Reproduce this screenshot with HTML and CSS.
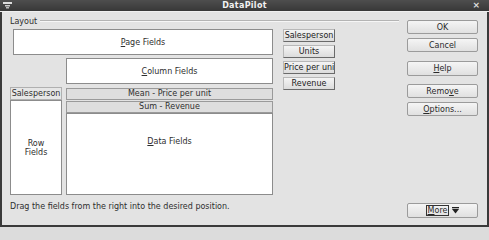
FILE: index.html
```html
<!DOCTYPE html>
<html>
<head>
<meta charset="utf-8">
<link rel="stylesheet" href="styles.css">
</head>
<body>
<div class="window">
  <div class="titlebar">
    <svg class="menu-icon" width="9" height="7" viewBox="0 0 9 7"><rect x="0" y="0" width="9" height="2" fill="#ddd"/><rect x="2" y="3" width="5" height="1.5" fill="#ccc"/><rect x="3" y="5" width="3" height="1.5" fill="#bbb"/></svg>
    <span class="title">DataPilot</span>
    <span class="close">×</span>
  </div>
  <div class="content">
    <div class="main">
      <div class="legend"><span class="legend-text">Layout</span><span class="legend-line"></span></div>
      <div class="layout-row">
        <div class="grid">
          <div class="box page"><span><u>P</u>age Fields</span></div>
          <div class="box column"><span><u>C</u>olumn Fields</span></div>
          <div class="hdr hdr-row">Salesperson</div>
          <div class="hdr hdr-mean">Mean - Price per unit</div>
          <div class="hdr hdr-sum">Sum - Revenue</div>
          <div class="box rowf"><span>Row<br>Fields</span></div>
          <div class="box data"><span><u>D</u>ata Fields</span></div>
        </div>
        <div class="fields">
          <div class="fbtn">Salesperson</div>
          <div class="fbtn">Units</div>
          <div class="fbtn">Price per unit</div>
          <div class="fbtn">Revenue</div>
        </div>
      </div>
      <div class="hint">Drag the fields from the right into the desired position.</div>
    </div>
    <div class="side">
      <div class="btn b-ok">OK</div>
      <div class="btn b-cancel">Cancel</div>
      <div class="btn b-help"><u>H</u>elp</div>
      <div class="btn b-remove">Remo<u>v</u>e</div>
      <div class="btn b-options"><u>O</u>ptions...</div>
      <div class="btn b-more"><span class="focus"><u>M</u>ore</span><svg class="dbl" width="7" height="7" viewBox="0 0 7 7"><rect x="0" y="0" width="7" height="1.3" fill="#222"/><path d="M0 2 L7 2 L3.5 6.5 Z" fill="#222"/></svg></div>
    </div>
  </div>
</div>
</body>
</html>
```
FILE: styles.css
```css
html, body {
  margin: 0;
  padding: 0;
  background: #dcdcdc;
}
body {
  font-family: "DejaVu Sans", "Liberation Sans", sans-serif;
  font-size: 8px;
  color: #2e2e2e;
}
.window {
  width: 489px;
  height: 227px;
  box-sizing: border-box;
  border: 2px solid #3a3a3a;
  border-top: none;
  background: #e3e3e3;
  display: flex;
  flex-direction: column;
}
.titlebar {
  height: 11px;
  background: linear-gradient(#4e4e4e, #383838);
  border-bottom: 1px solid #f0f0f0;
  display: flex;
  align-items: center;
  position: relative;
  margin: 0 -2px;
}
.menu-icon {
  margin-left: 3px;
}
.title {
  position: absolute;
  left: 0;
  right: 0;
  text-align: center;
  color: #f2f2f2;
  font-weight: bold;
  font-size: 8px;
  letter-spacing: 0.3px;
}
.close {
  margin-left: auto;
  margin-right: 9px;
  color: #ddd;
  font-size: 9px;
  font-weight: bold;
  line-height: 11px;
}
.content {
  flex: 1;
  display: flex;
}
.main {
  width: 397px;
  box-sizing: border-box;
  padding-left: 8px;
  display: flex;
  flex-direction: column;
}
.legend {
  display: flex;
  align-items: center;
  height: 14px;
  margin-top: 2px;
}
.legend-text {
  margin-right: 3px;
}
.legend-line {
  flex: 1;
  height: 0;
  border-top: 1px solid #b4b4b4;
  border-bottom: 1px solid #f6f6f6;
}
.layout-row {
  display: flex;
  margin-top: 1px;
}
.grid {
  display: grid;
  grid-template-columns: 52px 207px;
  grid-template-rows: 26px 29px 16px 13px 82px;
  column-gap: 4px;
  grid-template-areas:
    "page page"
    ". column"
    "hrow hmean"
    "rowf hsum"
    "rowf data";
}
.box {
  background: #fff;
  border: 1px solid #8c8c8c;
  box-sizing: border-box;
  display: flex;
  align-items: center;
  justify-content: center;
  text-align: center;
}
.page {
  grid-area: page;
  margin-left: 3px;
}
.column {
  grid-area: column;
  height: 26px;
  align-self: end;
}
.hdr {
  background: #dedede;
  border: 1px solid #9a9a9a;
  box-sizing: border-box;
  height: 12px;
  line-height: 10px;
  text-align: center;
  white-space: nowrap;
}
.hdr-row {
  grid-area: hrow;
  align-self: end;
  height: 13px;
  line-height: 11px;
  background: #e6e6e6;
  border-color: #b0b0b0;
}
.hdr-mean {
  grid-area: hmean;
  align-self: end;
  height: 12px;
}
.hdr-sum {
  grid-area: hsum;
  align-self: start;
  height: 12px;
  margin-top: 1px;
}
.rowf {
  grid-area: rowf;
  line-height: 9px;
}
.data {
  grid-area: data;
  align-items: flex-start;
  padding-top: 23px;
}
.fields {
  margin-left: 10px;
  display: flex;
  flex-direction: column;
  gap: 3px;
}
.fbtn {
  width: 52px;
  height: 13px;
  box-sizing: border-box;
  border: 1px solid #b8b8b8;
  border-right-color: #6a6a6a;
  border-bottom-color: #6a6a6a;
  background: linear-gradient(#f4f4f4, #dcdcdc);
  line-height: 11px;
  text-align: center;
  white-space: nowrap;
  overflow: hidden;
  color: #222;
}
.hint {
  margin-top: 7px;
}
.side {
  display: flex;
  flex-direction: column;
  margin-left: 8px;
  padding-top: 8px;
  width: 71px;
}
.btn {
  height: 14px;
  box-sizing: border-box;
  border: 1px solid #9b9b9b;
  border-radius: 2px;
  background: linear-gradient(#f5f5f5, #e0e0e0);
  display: flex;
  align-items: center;
  justify-content: center;
  color: #2a2a2a;
}
.b-cancel { margin-top: 4px; }
.b-help { margin-top: 9px; height: 15px; }
.b-remove { margin-top: 8px; }
.b-options { margin-top: 4px; }
.b-more { margin-top: auto; margin-bottom: 7px; height: 15px; gap: 3px; }
.focus {
  border: 1px solid #333;
  padding: 0 1px;
  line-height: 9px;
}
.dbl { display: block; }
u {
  text-decoration-thickness: 1px;
  text-underline-offset: 1px;
}
```
